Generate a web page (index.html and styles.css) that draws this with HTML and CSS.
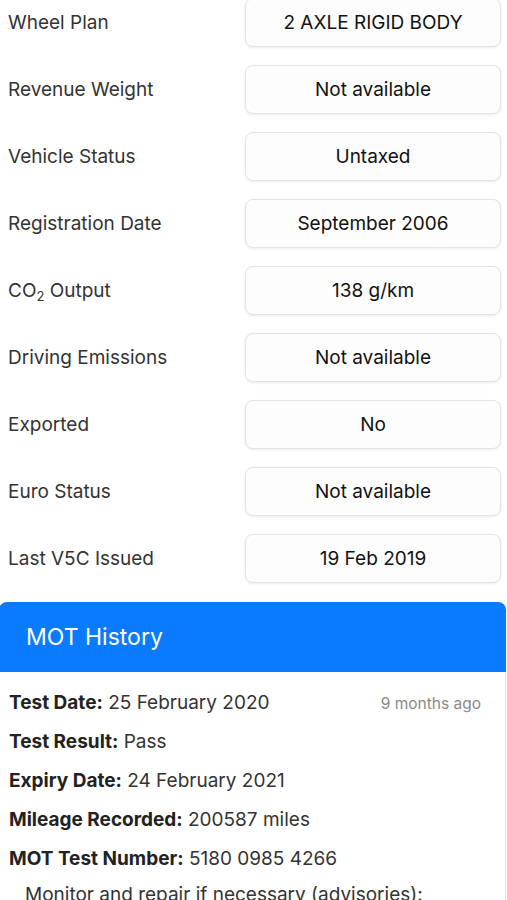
FILE: index.html
```html
<!DOCTYPE html>
<html lang="en">
<head>
  <meta charset="UTF-8">
  <meta name="viewport" content="width=device-width, initial-scale=1.0">
  <title>Vehicle Details</title>
  <link rel="stylesheet" href="styles.css">
</head>
<body>

  <div id="details">
    <div class="row">
      <div class="label">Wheel Plan</div>
      <div class="value">2 AXLE RIGID BODY</div>
    </div>
    <div class="row">
      <div class="label">Revenue Weight</div>
      <div class="value">Not available</div>
    </div>
    <div class="row">
      <div class="label">Vehicle Status</div>
      <div class="value">Untaxed</div>
    </div>
    <div class="row">
      <div class="label">Registration Date</div>
      <div class="value">September 2006</div>
    </div>
    <div class="row">
      <div class="label">CO<sub>2</sub> Output</div>
      <div class="value">138 g/km</div>
    </div>
    <div class="row">
      <div class="label">Driving Emissions</div>
      <div class="value">Not available</div>
    </div>
    <div class="row">
      <div class="label">Exported</div>
      <div class="value">No</div>
    </div>
    <div class="row">
      <div class="label">Euro Status</div>
      <div class="value">Not available</div>
    </div>
    <div class="row">
      <div class="label">Last V5C Issued</div>
      <div class="value">19 Feb 2019</div>
    </div>
  </div>

  <!-- Historique MOT -->
  <div id="mot-card">
    <div id="mot-header">MOT History</div>
    <div id="mot-body">
      <div class="mot-line">
        <span><b>Test Date:</b> 25 February 2020</span>
        <span class="ago">9 months ago</span>
      </div>
      <div class="mot-line"><span><b>Test Result:</b> Pass</span></div>
      <div class="mot-line"><span><b>Expiry Date:</b> 24 February 2021</span></div>
      <div class="mot-line"><span><b>Mileage Recorded:</b> 200587 miles</span></div>
      <div class="mot-line"><span><b>MOT Test Number:</b> 5180 0985 4266</span></div>
      <div class="advisories">Monitor and repair if necessary (advisories):</div>
    </div>
  </div>

</body>
</html>
```

FILE: styles.css
```css
body {
  font-family: Inter, 'Liberation Sans', Arial, sans-serif;
  margin: 0;
  padding: 0;
  background: #ffffff;
  color: #333333;
  overflow: hidden;
}

#details {
  display: flex;
  flex-direction: column;
  gap: 18px;
  padding: 0 6px 0 8px;
  margin-top: -2px;
}

.row {
  display: flex;
  align-items: center;
  justify-content: space-between;
}

.label {
  font-size: 19px;
  color: #333333;
}

.label sub {
  font-size: 13px;
  vertical-align: -4px;
  line-height: 0;
}

.value {
  width: 256px;
  height: 49px;
  box-sizing: border-box;
  display: flex;
  align-items: center;
  justify-content: center;
  font-size: 19px;
  color: #111111;
  background: #fdfdfd;
  border: 1px solid #e4e4e4;
  border-radius: 8px;
  box-shadow: 0 1px 3px rgba(0, 0, 0, 0.08);
}

/* Carte MOT */
#mot-card {
  margin: 19px 1px 0 -1px;
  border: 1px solid #e2e2e2;
  border-top: none;
  border-radius: 8px 8px 0 0;
}

#mot-header {
  background: #0a7bff;
  color: #ffffff;
  font-size: 23px;
  height: 70px;
  display: flex;
  align-items: center;
  padding-left: 27px;
  border-radius: 8px 8px 0 0;
  margin: 0 -1px;
}

#mot-body {
  padding: 19px 24px 0 9px;
  font-size: 19px;
  color: #333333;
}

.mot-line {
  display: flex;
  justify-content: space-between;
  align-items: baseline;
  height: 39px;
}

.mot-line b {
  font-weight: 700;
  color: #222222;
}

.ago {
  font-size: 15.5px;
  color: #8a8a8a;
}

.advisories {
  padding-left: 16px;
  margin-top: -3px;
  white-space: nowrap;
}
```
